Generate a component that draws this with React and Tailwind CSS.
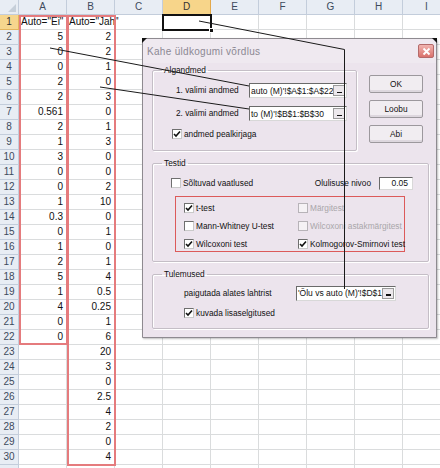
import React from "react";

const cols = ["A", "B", "C", "D", "E", "F", "G", "H", "I"];

const colA = ["Auto=\"Ei\"", "5", "0", "0", "2", "2", "0.561", "2", "1", "3", "0", "0", "1", "0.3", "0", "1", "2", "5", "1", "4", "0", "0"];
const colB = ["Auto=\"Jah\"", "2", "2", "1", "0", "3", "0", "1", "3", "0", "0", "2", "10", "0", "1", "0", "1", "4", "0.5", "0.25", "1", "6", "20", "3", "0", "2.5", "4", "2", "0", "4"];

function Cell({ value, first }) {
  if (!value) return <div className="border-r border-b border-[#dadcdd]" />;
  return (
    <div
      className={
        "border-r border-b border-[#dadcdd] text-[10px] leading-[14px] whitespace-nowrap text-[#111] " +
        (first ? "pl-[2px] text-left" : "pr-[3px] text-right")
      }
    >
      {value}
    </div>
  );
}

function Sheet() {
  const rows = [];
  for (let r = 1; r <= 31; r++) {
    const active = r === 1;
    rows.push(
      <div
        key={"h" + r}
        className={
          "border-r border-b text-[10px] leading-[14px] text-center " +
          (active
            ? "bg-[#f6d68d] border-[#e3b45c] text-[#333]"
            : "bg-[#e8edf4] border-[#c3cddb] text-[#3d4a5c]")
        }
      >
        {r < 31 ? r : ""}
      </div>
    );
    cols.forEach((c) => {
      let v = "";
      if (c === "A") v = colA[r - 1];
      if (c === "B") v = colB[r - 1];
      rows.push(<Cell key={c + r} value={v} first={r === 1} />);
    });
  }

  return (
    <div className="grid grid-cols-[19px_repeat(9,48px)] auto-rows-[15px]">
      <div className="relative bg-[#e8edf4] border-r border-b border-[#c3cddb]">
        <svg width="19" height="15" className="block">
          <polygon points="16,4 16,12 8,12" fill="#c6cfd9" />
        </svg>
      </div>
      {cols.map((c) => (
        <div
          key={c}
          className={
            "border-r border-b text-[10px] leading-[14px] text-center " +
            (c === "D"
              ? "bg-[#f7d58a] border-[#e3a84a] text-[#333]"
              : "bg-[#e8edf4] border-[#c3cddb] text-[#3d4a5c]")
          }
        >
          {c}
        </div>
      ))}
      {rows}
    </div>
  );
}

function Check({ checked, disabled }) {
  return (
    <div
      className={
        "w-[10px] h-[10px] shrink-0 border flex items-center justify-center " +
        (disabled
          ? "bg-[#f5f2f5] border-[#b7b3b8]"
          : "bg-white border-t-[#6f6f6f] border-l-[#6f6f6f] border-b-[#c9c9c9] border-r-[#c9c9c9]")
      }
    >
      {checked && (
        <svg width="8" height="8" viewBox="0 0 8 8">
          <path d="M1 4 L3 6 L7 1.5" fill="none" stroke="#111" strokeWidth="1.6" />
        </svg>
      )}
    </div>
  );
}

function CheckRow({ label, checked, disabled }) {
  return (
    <div className="flex items-center gap-[2px] h-[14px] whitespace-nowrap">
      <Check checked={checked} disabled={disabled} />
      <span className={disabled ? "text-[#a9a6aa]" : "text-[#111]"}>{label}</span>
    </div>
  );
}

function RefInput({ value, width }) {
  return (
    <div
      className={
        "flex items-center h-[15px] bg-white border border-t-[#6a6a6a] border-l-[#6a6a6a] border-b-[#d8d8d8] border-r-[#d8d8d8] " +
        width
      }
    >
      <span className="flex-1 overflow-hidden whitespace-nowrap pl-[1px] text-[8.5px] leading-[12px] text-[#111]">
        {value}
      </span>
      <div className="w-[12px] h-[11px] mr-[1px] bg-[#ece8ec] border border-[#9a9a9a] flex items-end justify-center">
        <div className="w-[5px] h-[1.5px] bg-[#111] mb-[2px]" />
      </div>
    </div>
  );
}

function Btn({ children }) {
  return (
    <button className="w-[54px] h-[18px] rounded-[2px] border border-[#9c989d] bg-[#f1edf1] text-[8.3px] text-[#111] shadow-[inset_0_-2px_0_#ddd7de]">
      {children}
    </button>
  );
}

function Group({ title, className, children }) {
  return (
    <fieldset className={"border border-[#c4bec6] rounded-[2px] shadow-[inset_1px_1px_0_#fff,1px_1px_0_#fff] " + className}>
      <legend className="ml-[9px] px-[2px] leading-[10px] text-[#111]">{title}</legend>
      {children}
    </fieldset>
  );
}

function Dialog() {
  return (
    <div className="absolute left-[142px] top-[38px] w-[295px] h-[300px] bg-[#ece4ed] border border-[#8e8a90] rounded-t-[4px] shadow-[1px_1px_2px_rgba(0,0,0,0.25)] text-[8.3px] font-['Liberation_Sans',Arial,sans-serif]">
      <div className="h-[24px] flex items-center justify-between pl-[4px] pr-[2px] bg-[#efe9f0]">
        <span className="text-[10px] tracking-[0.3px] text-[#8c8893]">Kahe üldkogumi võrdlus</span>
        <div className="w-[16px] h-[14px] rounded-[2px] border border-[#b46a6a] bg-gradient-to-b from-[#f0b4b0] to-[#d9716c] flex items-center justify-center">
          <svg width="9" height="9" viewBox="0 0 9 9">
            <path d="M1.5 1.5 L7.5 7.5 M7.5 1.5 L1.5 7.5" stroke="#fff" strokeWidth="1.8" />
          </svg>
        </div>
      </div>

      <div className="px-[9px] pt-[2px]">
        <div className="flex">
          <Group title="Algandmed" className="w-[205px] pb-[9px]">
            <div className="flex flex-col mt-[8px]">
              <div className="flex items-center h-[15px] pl-[23px]">
                <span className="w-[73px] text-[#111]">1. valimi andmed</span>
                <RefInput value="auto (M)'!$A$1:$A$22" width="w-[98px]" />
              </div>
              <div className="flex items-center h-[15px] pl-[23px] mt-[8px]">
                <span className="w-[73px] text-[#111]">2. valimi andmed</span>
                <RefInput value="to (M)'!$B$1:$B$30" width="w-[98px]" />
              </div>
              <div className="pl-[19px] mt-[6px]">
                <CheckRow label="andmed pealkirjaga" checked />
              </div>
            </div>
          </Group>
          <div className="flex flex-col gap-[7px] ml-[12px] mt-[10px]">
            <Btn>OK</Btn>
            <Btn>Loobu</Btn>
            <Btn>Abi</Btn>
          </div>
        </div>

        <Group title="Testid" className="w-[277px] mt-[7px] pb-[9px]">
          <div className="flex items-center justify-between h-[14px] mt-[8px] pl-[18px] pr-[15px]">
            <CheckRow label="Sõltuvad vaatlused" />
            <div className="flex items-center">
              <span className="text-[#111]">Olulisuse nivoo</span>
              <div className="w-[34px] h-[13px] ml-[8px] bg-white border border-t-[#6a6a6a] border-l-[#6a6a6a] border-b-[#d8d8d8] border-r-[#d8d8d8] text-right pr-[4px] text-[8.5px] leading-[11px] text-[#111]">
                0.05
              </div>
            </div>
          </div>
          <div className="ml-[22px] mt-[6px] w-[230px] h-[56px] border border-[#dc5a5a] grid grid-cols-[114px_1fr] gap-y-[4px] pt-[4px] pl-[8px]">
            <CheckRow label="t-test" checked />
            <CheckRow label="Märgitest" disabled />
            <CheckRow label="Mann-Whitney U-test" />
            <CheckRow label="Wilcoxoni astakmärgitest" disabled />
            <CheckRow label="Wilcoxoni test" checked />
            <CheckRow label="Kolmogorov-Smirnovi test" checked />
          </div>
        </Group>

        <Group title="Tulemused" className="w-[277px] mt-[7px] pb-[8px]">
          <div className="flex items-center h-[14px] mt-[7px] pl-[31px]">
            <span className="w-[112px] text-[#111]">paigutada alates lahtrist</span>
            <RefInput value="'Õlu vs auto (M)'!$D$1" width="w-[100px]" />
          </div>
          <div className="pl-[31px] mt-[6px]">
            <CheckRow label="kuvada lisaselgitused" checked />
          </div>
        </Group>
      </div>
    </div>
  );
}

export default function App() {
  return (
    <div className="relative w-[440px] h-[468px] overflow-hidden bg-white font-['Liberation_Sans',Arial,sans-serif]">
      <Sheet />

      {/* selected cell D1 */}
      <div className="absolute left-[162px] top-[14px] w-[50px] h-[17px] border-2 border-[#111]" />
      <div className="absolute left-[209px] top-[28px] w-[5px] h-[5px] bg-[#111] border border-white" />

      {/* red outlines around the data */}
      <div className="absolute left-[19px] top-[15px] w-[49px] h-[330px] border-2 border-[#e57b7d]" />
      <div className="absolute left-[67px] top-[15px] w-[49px] h-[451px] border-2 border-[#e57b7d]" />

      <Dialog />

      <svg className="absolute inset-0 pointer-events-none" width="440" height="468">
        <polygon points="142,38 147,38 142,43" fill="#111" />
        <polygon points="437,38 432,38 437,43" fill="#111" />
        <path d="M50 48 L249 86" stroke="#1a1a1a" strokeWidth="1" fill="none" />
        <path d="M100 87 L249 109" stroke="#1a1a1a" strokeWidth="1" fill="none" />
        <path d="M199 21 L344.5 49.5 L344.5 289" stroke="#1a1a1a" strokeWidth="1" fill="none" />
      </svg>
    </div>
  );
}
